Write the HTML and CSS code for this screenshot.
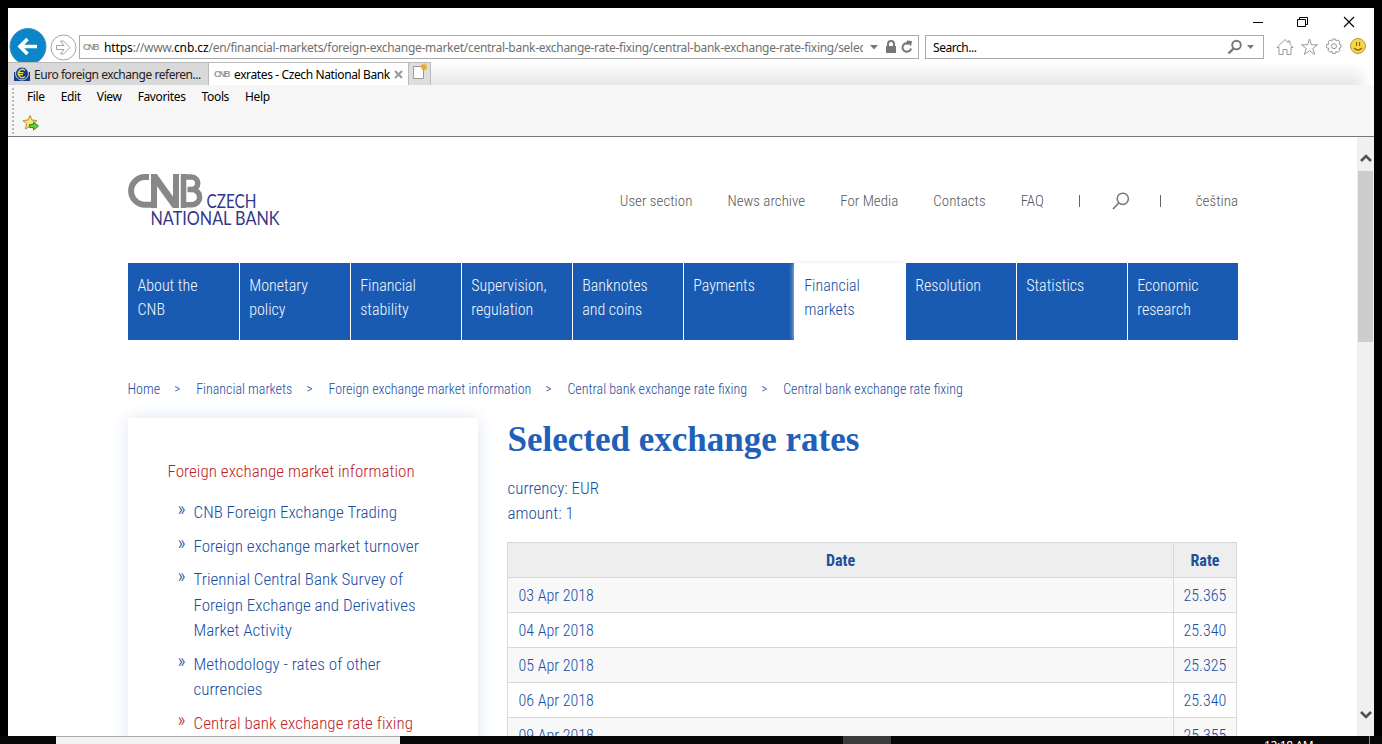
FILE: index.html
```html
<!DOCTYPE html>
<html lang="en">
<head>
<meta charset="utf-8">
<title>exrates - Czech National Bank</title>
<link rel="stylesheet" href="styles.css">
</head>
<body>
<div class="window">
  <div class="titlebar">
    <svg class="controls" width="100" height="12" viewBox="0 0 100 12"><g fill="none" stroke="#000"><path d="M1 6.500h10M45.500 3.500h8v7h-8zM47.500 3.500v-2h8v7h-2"/><path d="M92 1l10 10M102 1L92 11" stroke-width="1.100"/></g></svg>
  </div>
  <div class="navrow">
    <svg class="back" width="40" height="34" viewBox="0 0 40 34"><circle cx="20" cy="18.500" r="18" fill="#0b86c8" stroke="#4c8fb4"/><path d="M29 18.500H12M19.500 11l-7.500 7.500 7.500 7.500" fill="none" stroke="#fff" stroke-width="3.600"/></svg>
    <svg class="forward" width="27" height="27" viewBox="0 0 27 27"><g fill="#fff" stroke="#a3a3a3"><circle cx="13.500" cy="13.500" r="12.500"/><path d="M6.500 11.500h7.500l-3.500-4.500h3l6.500 6.500-6.500 6.500h-3l3.500-4.500H6.500z"/></g></svg>
    <div class="address">
      <span class="favicon">CNB</span>
      <span class="url"><b>https</b>://www.<b>cnb.cz</b>/en/financial-markets/foreign-exchange-market/central-bank-exchange-rate-fixing/central-bank-exchange-rate-fixing/selec</span>
      <svg width="46" height="16" viewBox="0 0 46 16"><path d="M1 6h8L5 10.500z" fill="#777"/><path d="M17 7h10v7H17z" fill="#777"/><path d="M19 8V5a3 3 0 0 1 6 0v3" fill="none" stroke="#777" stroke-width="2"/><path d="M42 9.500A4.300 4.300 0 1 1 39.500 4.500" fill="none" stroke="#777" stroke-width="2"/><path d="M38 1.500l5 .5-1 5.500-1.500-2-3.500 0z" fill="#777"/></svg>
    </div>
    <div class="search"><span>Search...</span>
      <svg width="30" height="16" viewBox="0 0 30 16"><circle cx="9.500" cy="6" r="4.300" fill="none" stroke="#777" stroke-width="1.900"/><path d="M6.500 9.500l-5 5" stroke="#777" stroke-width="2.400"/><path d="M20 6h7l-3.500 4z" fill="#777"/></svg>
    </div>
    <svg class="tools" width="92" height="20" viewBox="0 0 92 20"><g fill="#fff" stroke="#999"><path d="M3 10.500H1l8-8 3 3V4h2v3.500l3 3h-2V17.500h-4v-5H7v5H3z"/><path d="M33.500 2l2 5.800h6l-4.700 3.600 1.800 6-5.100-3.600-5.100 3.600 1.800-6-4.700-3.600h6z"/><path d="M56.500 2h3l.5 2 2-1 2 2-1 2 2 .7v3l-2 .7 1 2-2 2-2-1-.5 2h-3l-.5-2-2 1-2-2 1-2-2.500-.7v-3l2.500-.7-1-2 2-2 2 1z"/><circle cx="58" cy="9.200" r="2.500"/></g><circle cx="82" cy="9" r="7.500" fill="#f8d643" stroke="#b49a45"/><path d="M78 11q4 4 8 0M80.500 5v4M83.500 5v4" fill="none" stroke="#866a18" stroke-width="1.200"/></svg>
  </div>
  <div class="tabs">
    <div class="tab"><svg width="16" height="16" viewBox="0 0 16 16"><path d="M0 6h16v9H0z" fill="#113f8c"/><circle cx="8" cy="7.500" r="6.500" fill="#123b99" stroke="#cbd6e6"/><path d="M11 4.500A4 4 0 1 0 11 10.500M4 6.600h5.500M4 8.600h5" fill="none" stroke="#e4df3f" stroke-width="1.300"/></svg><span class="tabtitle">Euro foreign exchange referen...</span></div>
    <div class="tab active"><span class="favicon">CNB</span><span>exrates - Czech National Bank</span><svg width="9" height="9" viewBox="0 0 9 9"><path d="M1 1l7 7M8 1L1 8" stroke="#999" stroke-width="2"/></svg></div>
    <div class="newtab"><svg width="22" height="22" viewBox="0 0 22 22"><path d="M4.500 5.500h10v12h-10z" fill="#fff" stroke="#999"/><path d="M15 2.500v7M11.500 6h7M12.500 3.500l5 5M17.500 3.500l-5 5" stroke="#f3a01e" stroke-width="1.200"/></svg></div>
  </div>
  <div class="menus">
    <nav class="menu"><span>File</span><span>Edit</span><span>View</span><span>Favorites</span><span>Tools</span><span>Help</span></nav>
    <svg class="favadd" width="18" height="18" viewBox="0 0 18 18"><path d="M8 1.500l2 4.500 5 .6-3.800 3.200 1 5-4.200-2.500-4.500 2.700 1-5.200L1 6.600l5-.6z" fill="#fbe27c" stroke="#b8912a"/><path d="M7.500 10.500h4V8l5 4-5 4v-2.500h-4z" fill="#62cf3d" stroke="#2c8f24"/></svg>
  </div>
  <div class="view">
    <main class="page">
      <header class="top">
        <svg class="logo" width="155" height="56" viewBox="0 0 155 56"><g fill="none" stroke="#888" stroke-width="6"><path d="M21 4h-4a13.900 13.900 0 0 0 0 27.800h9"/><path d="M26 1v34M48 1v34" stroke-width="6"/><path d="M26 3l21.500 30" stroke-width="7"/><path d="M55.500 1v34M55.500 4h8a6 6 0 0 1 0 12.500h-4M61 16.500h3a7.500 7.500 0 0 1 0 15.300h-9" stroke-width="5.500"/></g><g class="logotext"><text x="78.500" y="34.500" textLength="50" lengthAdjust="spacingAndGlyphs">CZECH</text><text x="22.500" y="52" textLength="129" lengthAdjust="spacingAndGlyphs">NATIONAL BANK</text></g></svg>
        <nav class="links"><span>User section</span><span>News archive</span><span>For Media</span><span>Contacts</span><span>FAQ</span><i></i><svg width="18" height="18" viewBox="0 0 18 18"><circle cx="10.800" cy="6.800" r="5.600" fill="none" stroke="#777" stroke-width="1.500"/><path d="M6.700 11L1 17" stroke="#777" stroke-width="1.800"/></svg><i></i><span>čeština</span></nav>
      </header>
      <nav class="mainnav"><a>About the<br>CNB</a><a>Monetary<br>policy</a><a>Financial<br>stability</a><a>Supervision,<br>regulation</a><a>Banknotes<br>and coins</a><a>Payments</a><a class="on">Financial<br>markets</a><a>Resolution</a><a>Statistics</a><a>Economic<br>research</a></nav>
      <div class="crumbs"><span>Home</span><i>&gt;</i><span>Financial markets</span><i>&gt;</i><span>Foreign exchange market information</span><i>&gt;</i><span>Central bank exchange rate fixing</span><i>&gt;</i><span>Central bank exchange rate fixing</span></div>
      <div class="columns">
        <aside class="side">
          <h2>Foreign exchange market information</h2>
          <ul>
            <li>CNB Foreign Exchange Trading</li>
            <li>Foreign exchange market turnover</li>
            <li>Triennial Central Bank Survey of<br>Foreign Exchange and Derivatives<br>Market Activity</li>
            <li>Methodology - rates of other<br>currencies</li>
            <li class="on">Central bank exchange rate fixing</li>
          </ul>
        </aside>
        <section class="content">
          <h1>Selected exchange rates</h1>
          <p>currency: EUR<br>amount: 1</p>
          <table>
            <tr><th>Date</th><th class="rate">Rate</th></tr>
            <tr><td>03 Apr 2018</td><td>25.365</td></tr>
            <tr><td>04 Apr 2018</td><td>25.340</td></tr>
            <tr><td>05 Apr 2018</td><td>25.325</td></tr>
            <tr><td>06 Apr 2018</td><td>25.340</td></tr>
            <tr><td>09 Apr 2018</td><td>25.355</td></tr>
          </table>
        </section>
      </div>
    </main>
    <div class="scrollbar"><svg width="12" height="8" viewBox="0 0 12 8"><path d="M1 7l5-5 5 5" fill="none" stroke="#505050" stroke-width="2.600"/></svg><div class="thumb"></div><svg width="12" height="8" viewBox="0 0 12 8"><path d="M1 1l5 5 5-5" fill="none" stroke="#505050" stroke-width="2.600"/></svg></div>
  </div>
</div>
<footer class="taskbar"><div class="tasksearch"></div><div class="taskapp"></div><span class="clock">12:18 AM</span><i class="peek"></i></footer>
</body>
</html>
```
FILE: styles.css
```css
* { box-sizing: border-box; }
body { margin: 0; height: 744px; padding: 8px 8px 0; background: #000; overflow: hidden; font-family: "Noto Sans", sans-serif; font-size: 12px; color: #000; }
svg { display: block; flex: none; }
.window { height: 728px; background: #fff; display: flex; flex-direction: column; overflow: hidden; }
.titlebar { height: 20px; padding: 8px 20px 0 0; display: flex; justify-content: flex-end; flex: none; }
.controls { overflow: visible; margin-right: 2px; }
.navrow { height: 34px; display: flex; align-items: flex-start; flex: none; }
.forward { margin: 6px 2.500px 0 1.500px; }
.address { width: 840px; height: 24px; margin-top: 7px; border: 1px solid #aaa; display: flex; align-items: center; padding: 0 3px; }
.favicon { width: 17px; font: bold 9px/12px "Liberation Sans", sans-serif; letter-spacing: -1.500px; color: #999; flex: none; }
.url { margin-left: 4px; width: 759px; margin-right: 6px; overflow: hidden; white-space: nowrap; color: #707070; flex: none; line-height: 20px; letter-spacing: -0.285px; padding-top: 1px; }
.url b { font-weight: 400; color: #000; letter-spacing: -0.100px; }
.search { width: 339px; height: 24px; margin: 7px 0 0 6px; border: 1px solid #aaa; display: flex; justify-content: space-between; align-items: center; padding: 0 7px; letter-spacing: -0.450px; }
.search span { padding-top: 1px; }
.search svg { margin-right: -1px; }
.tools { margin: 9px 0 0 12px; }
.tabs { height: 23px; display: flex; background: linear-gradient(90deg, transparent 98.500%, #fff 99.800%), linear-gradient(#fff, #ececec 80%, #e8e8e8); flex: none; }
.tab { width: 200px; border-top: 1px solid #bbb; background: #d9d9d9; display: flex; align-items: center; padding-left: 6px; white-space: nowrap; letter-spacing: -0.380px; flex: none; }
.tab svg { margin-right: 4px; }
.tab span { padding-top: 1px; }
.tab .tabtitle { letter-spacing: -0.450px; color: #222; }
.tab.active { background: #fff; border-left: 1px solid #bbb; padding-left: 5px; }
.tab.active .favicon { margin-right: 3px; letter-spacing: -1.500px; padding: 0; }
.tab.active svg { margin: 0 0 0 4px; }
.newtab { width: 23px; border: 1px solid #bbb; border-bottom: 0; background: #dedede; }
.newtab svg { margin-top: -2px; }
.menus { height: 52px; background: #f6f6f6; border-bottom: 1px solid #777; padding: 0 4px; flex: none; position: relative; }
.menus::before { content: ""; position: absolute; left: 4px; top: 3px; height: 46px; border-left: 2px dotted #bbb; }
.menu { display: flex; gap: 16px; padding: 3px 0 0 15px; line-height: 18px; height: 28px; letter-spacing: -0.360px; }
.favadd { margin: 1px 0 0 10px; }
.view { display: flex; flex: 1; min-height: 0; }
.page { flex: 1; padding: 0 119px 0 120px; overflow: hidden; font-family: "Roboto Condensed", Roboto, sans-serif; font-stretch: 75%; font-weight: 300; color: #184da2; font-size: 16px; }
.top { height: 126px; display: flex; justify-content: space-between; padding-top: 36px; }
.logotext { font: 18.500px Lato, sans-serif; fill: #33368c; }
.links { display: flex; color: #585858; font-size: 15px; line-height: 20px; padding-top: 18px; height: 38px; gap: 35px; white-space: nowrap; }
.links i { width: 1px; height: 12px; background: #666; margin-top: 4px; }
.links svg { margin: 1px -5px 0 -3px; }
.mainnav { display: grid; grid-template-columns: repeat(10, 111px); height: 77px; }
.mainnav a { background: #195bb2; color: #f2faff; border-left: 1px solid #fff; padding: 11px 0 0 9.200px; line-height: 24px; white-space: nowrap; }
.mainnav a:first-child { border-left-color: #195bb2; padding-left: 8.500px; }
.mainnav a.on { background: #fff; color: #184da2; box-shadow: 0 0 5px #dfe5f0; border: 0; padding-left: 10.200px; clip-path: inset(-3px 0 0 -5px); }
.crumbs { padding-top: 39px; font-size: 14px; line-height: 20px; height: 77px; display: flex; white-space: nowrap; margin-left: -0.500px; }
.crumbs i { font-style: normal; width: 36.100px; text-align: center; font-size: 13px; padding-right: 2px; }
.columns { display: flex; gap: 29px; }
.side { width: 350px; height: 420px; margin-top: 1px; box-shadow: 0 0 16px #dde5f2; padding: 41px 0 0 39.500px; line-height: 25.500px; white-space: nowrap; font-size: 17px; letter-spacing: 0.020px; }
.side h2 { margin: 0 0 15.500px; font-size: 17px; font-weight: 300; color: #bd1d25; }
.side ul { margin: 0; padding: 0; list-style: none; }
.side li { padding-left: 26px; position: relative; margin-bottom: 8px; }
.side li::before { content: "»"; position: absolute; left: 10px; top: -3px; font-size: 20px; }
.side li.on { color: #bd1d25; }
.content { width: 730px; }
h1 { font: bold 35px/44px "Liberation Serif", serif; color: #2060b8; margin: 1px 0 14px 0.500px; height: 44px; white-space: nowrap; }
p { margin: 0 0 16px 0.500px; line-height: 25px; font-size: 17px; }
table { border-collapse: collapse; width: 730px; table-layout: fixed; }
th, td { border: 1px solid #d8d8d8; height: 35px; padding: 0 10.500px; }
th { background: #eee; font-weight: 700; color: #1c4f9c; }
.rate { width: 63px; }
td + td { padding: 0 9.500px; }
tr:nth-child(even) { background: #f9f8f9; }
.scrollbar { width: 17px; background: #f0f0f0; display: flex; flex-direction: column; align-items: center; padding: 17px 0; }
.thumb { width: 15px; height: 171px; background: #cdcdcd; margin: 9px 0 auto; }
.taskbar { height: 8px; margin: 0 -8px; display: flex; padding-left: 56px; background: #080808; overflow: hidden; }
.tasksearch { width: 344px; background: #f2f2f2; border-top: 1px solid #aaa; }
.taskapp { width: 48px; margin-left: 443px; background: #3c3c3c; }
.clock { color: #fff; margin-left: 373px; line-height: 12px; padding-top: 4px; white-space: nowrap; letter-spacing: -0.400px; }
.peek { width: 1px; background: #888; margin-left: auto; margin-right: 12px; }
```
